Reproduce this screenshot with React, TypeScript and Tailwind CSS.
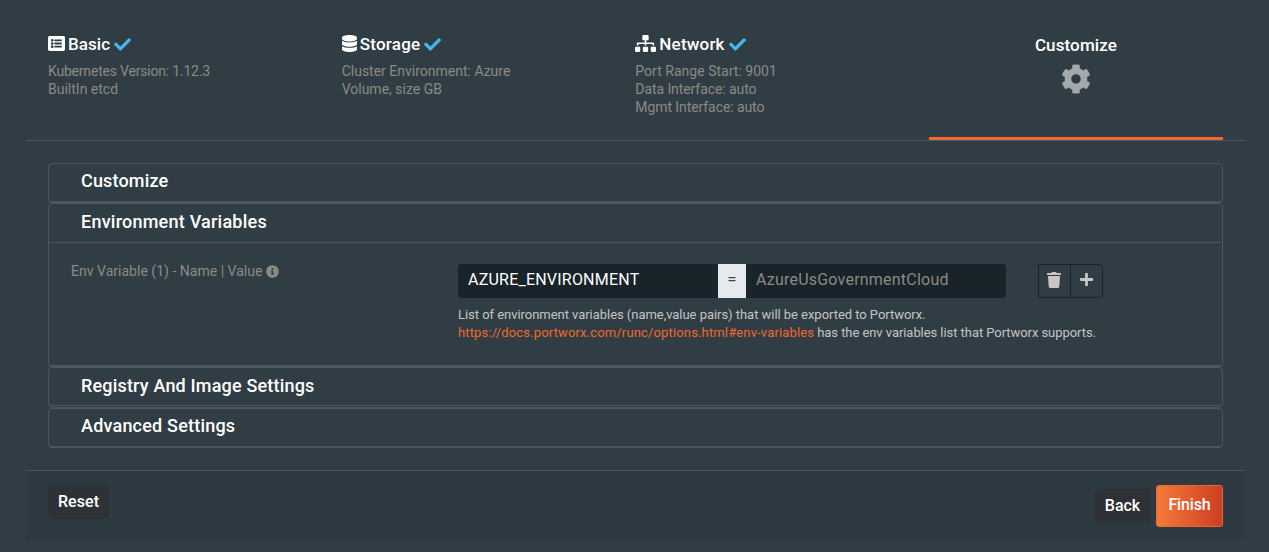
import type { ReactNode } from "react";
import {
  FaCheck,
  FaCog,
  FaDatabase,
  FaInfoCircle,
  FaListAlt,
  FaPlus,
  FaSitemap,
  FaTrash,
} from "react-icons/fa";

function Step({ icon, title, titleClass, lines }: { icon: ReactNode; title: string; titleClass: string; lines: { text: string; className: string }[] }) {
  return (
    <div className="w-[293.67px] pt-[33px]">
      <div className="flex h-[22px] items-center text-[17px] font-[480] text-white">
        {icon}
        <span className={`pt-px ${titleClass}`}>{title}</span>
        <FaCheck className="ml-[4px] shrink-0 text-[17px] text-[#42b9e8]" />
      </div>
      <div className="mt-[7px] text-[14px] leading-[18px] text-[#8b8a83]">
        {lines.map((line) => (
          <div key={line.text} className={line.className}>{line.text}</div>
        ))}
      </div>
    </div>
  );
}

function Panel({ title, className, headerClass, titleClass, children }: { title: string; className: string; headerClass: string; titleClass: string; children?: ReactNode }) {
  return (
    <section className={`rounded-[4px] border border-[#4a575f] ${className}`}>
      <div className="pr-px">
        <h2 className={`border-b border-[#4a575f] pl-[32px] text-[18px] font-[480] text-white ${headerClass} ${titleClass}`}>{title}</h2>
      </div>
      {children}
    </section>
  );
}

export default function App() {
  return (
    <div className="h-[552px] w-[1269px] overflow-hidden bg-[#313d45] px-[24px] font-['Roboto',sans-serif]">
      <div className="ml-[2px] w-[1219px]">
        <header className="flex h-[141px] border-b border-[#4a575f] pl-[22px]">
          <Step
            icon={<FaListAlt className="mb-px shrink-0 text-[17px]" />}
            title="Basic"
            titleClass="ml-[3px] tracking-[0.04px]"
            lines={[
              { text: "Kubernetes Version: 1.12.3", className: "tracking-[-0.2px]" },
              { text: "BuiltIn etcd", className: "" },
            ]}
          />
          <Step
            icon={<FaDatabase className="mb-px h-[17px] w-[15px] shrink-0" />}
            title="Storage"
            titleClass="ml-[3px] tracking-[0.25px]"
            lines={[
              { text: "Cluster Environment: Azure", className: "" },
              { text: "Volume, size GB", className: "" },
            ]}
          />
          <Step
            icon={<FaSitemap className="mb-px h-[17px] w-[21px] shrink-0" />}
            title="Network"
            titleClass="ml-[3px] tracking-[0.2px]"
            lines={[
              { text: "Port Range Start: 9001", className: "tracking-[0.02px]" },
              { text: "Data Interface: auto", className: "tracking-[-0.08px]" },
              { text: "Mgmt Interface: auto", className: "tracking-[-0.08px]" },
            ]}
          />
          <div className="flex w-[294px] flex-col items-center border-b-[3px] border-[#ee6a2c] pt-[34px]">
            <span className="text-[17px] leading-[22px] font-[480] tracking-[0.12px] text-white">Customize</span>
            <FaCog className="mt-[8px] text-[30px] text-[#a3a8ab]" />
          </div>
        </header>

        <main className="mt-[22px] ml-[22px] w-[1175px]">
          <Panel title="Customize" className="h-[40px]" headerClass="h-[38px] leading-[34px]" titleClass="tracking-[0.17px]" />
          <Panel title="Environment Variables" className="h-[164px]" headerClass="h-[39px] leading-[36px]" titleClass="tracking-[0.23px]">
            <div className="flex h-[123px] border-b border-[#4a575f] pt-[21px] pl-[22px]">
              <div className="flex h-[15px] w-[387px] items-center text-[14px] text-[#8b8a83]">
                <span className="tracking-[0.02px]">Env Variable (1) - Name | Value</span>
                <FaInfoCircle className="mb-px ml-[4px] text-[13px]" />
              </div>
              <div>
                <div className="flex h-[34px]">
                  <input
                    className="w-[260px] rounded-l-[4px] bg-[#18232a] px-[10px] pb-[3px] text-[16px] tracking-[0.22px] text-white outline-none"
                    defaultValue="AZURE_ENVIRONMENT"
                  />
                  <span className="flex w-[28px] items-center justify-center bg-[#e6e9ee] pb-[2px] text-[17px] text-[#3f474d]">=</span>
                  <input
                    className="w-[260px] rounded-r-[4px] bg-[#18232a] px-[10px] pb-[3px] text-[16px] tracking-[0.22px] outline-none placeholder:text-[#8b8a83]"
                    placeholder="AzureUsGovernmentCloud"
                  />
                  <div className="ml-[32px] flex w-[65px] rounded-r-[4px] border border-[#18232a] text-[#c8c6c6]">
                    <button className="flex w-[32px] items-center justify-center border-r border-[#18232a] pr-px pb-[3px]"><FaTrash className="h-[16px] w-[14px]" /></button>
                    <button className="flex w-[31px] items-center justify-center pb-[3px]"><FaPlus className="text-[15px]" /></button>
                  </div>
                </div>
                <div className="mt-[8px] text-[13px] leading-[18px] whitespace-nowrap text-[#c4c4c2]">
                  <div className="tracking-[-0.04px]">List of environment variables (name,value pairs) that will be exported to Portworx.</div>
                  <div className="flex">
                    <a className="tracking-[0.15px] text-[#ee6a2c]">https://docs.portworx.com/runc/options.html#env-variables</a>
                    <span className="ml-[3px] tracking-[-0.06px]">has the env variables list that Portworx supports.</span>
                  </div>
                </div>
              </div>
            </div>
          </Panel>
          <Panel title="Registry And Image Settings" className="h-[41px]" headerClass="h-[38px] leading-[36px]" titleClass="tracking-[0.18px]" />
          <Panel title="Advanced Settings" className="h-[40px]" headerClass="h-[38px] leading-[34px]" titleClass="tracking-[0.2px]" />
        </main>

        <footer className="mt-[22px] flex h-[71px] items-start rounded-b-[4px] border-t border-[#4a575f] bg-[#2e3a42] px-[22px] pt-[14px] text-[16px] font-[480] text-white">
          <button className="h-[34px] w-[61px] rounded-[4px] bg-[#2e3236] tracking-[0.08px]">Reset</button>
          <button className="mt-[4px] ml-auto h-[34px] w-[55px] rounded-[4px] bg-[#2e3236]">Back</button>
          <button className="ml-[6px] h-[42px] w-[67px] rounded-[3px] border border-[#ee6a2c] bg-linear-to-r from-[#f5793a] to-[#cd3d22] pb-[3px] tracking-[-0.15px]">Finish</button>
        </footer>
      </div>
    </div>
  );
}
